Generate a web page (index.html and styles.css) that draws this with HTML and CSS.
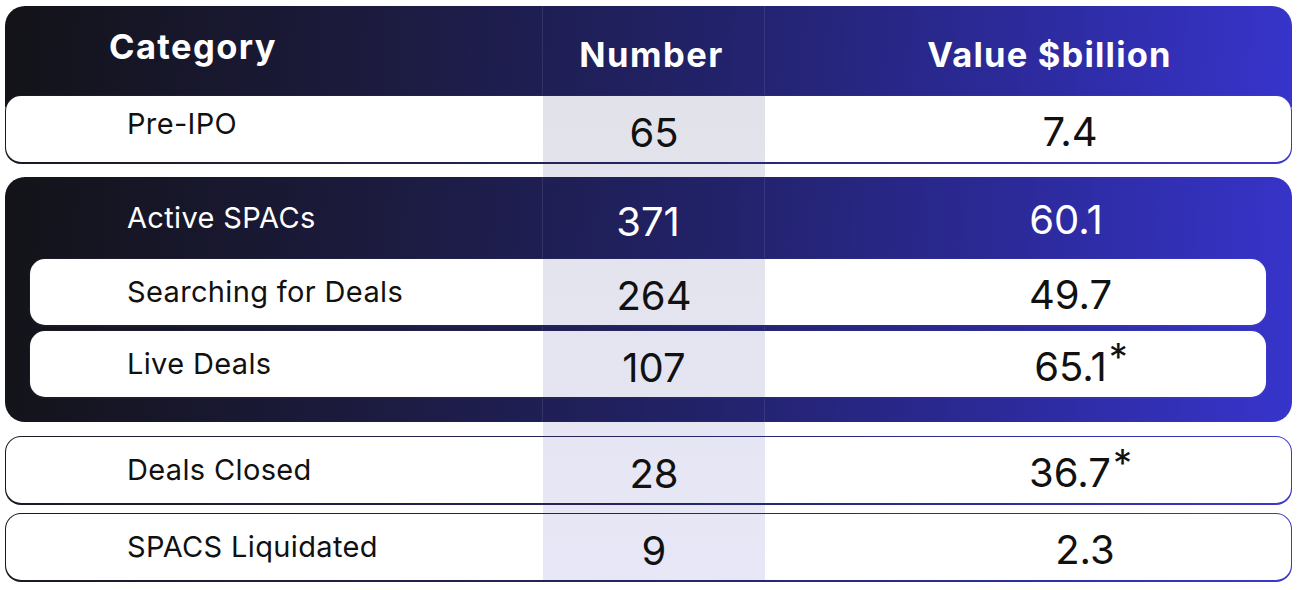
FILE: index.html
```html
<!DOCTYPE html>
<html lang="en">
<head>
<meta charset="utf-8">
<title>SPAC summary</title>
<link rel="stylesheet" href="styles.css">
</head>
<body>
<div class="table">
  <div class="head dark">
    <div class="h-cat">Category</div>
    <div class="h-num">Number</div>
    <div class="h-val">Value $billion</div>
  </div>

  <div class="row row-outer row-first">
    <div class="row-in">
      <div class="c-label lab-up">Pre-IPO</div>
      <div class="c-num stripe">65</div>
      <div class="c-val">7.4</div>
    </div>
  </div>

  <div class="group dark">
    <div class="group-head">
      <div class="c-label">Active SPACs</div>
      <div class="c-num">371</div>
      <div class="c-val">60.1</div>
    </div>
    <div class="row row-inner">
      <div class="row-in">
        <div class="c-label">Searching for Deals</div>
        <div class="c-num stripe">264</div>
        <div class="c-val">49.7</div>
      </div>
    </div>
    <div class="row row-inner">
      <div class="row-in">
        <div class="c-label">Live Deals</div>
        <div class="c-num stripe">107</div>
        <div class="c-val"><span class="v">65.1<span class="star">*</span></span></div>
      </div>
    </div>
  </div>

  <div class="row row-outer row-closed">
    <div class="row-in">
      <div class="c-label">Deals Closed</div>
      <div class="c-num stripe">28</div>
      <div class="c-val"><span class="v">36.7<span class="star">*</span></span></div>
    </div>
  </div>

  <div class="row row-outer row-liq">
    <div class="row-in">
      <div class="c-label">SPACS Liquidated</div>
      <div class="c-num stripe">9</div>
      <div class="c-val val-shift">2.3</div>
    </div>
  </div>
</div>
</body>
</html>
```

FILE: styles.css
```css
* { box-sizing: border-box; }

html, body {
  margin: 0;
  padding: 0;
  background: #ffffff;
}

body {
  font-family: Inter, "Liberation Sans", sans-serif;
  color: #111111;
  width: 1298px;
  height: 590px;
  overflow: hidden;
}

.table {
  margin: 6px 0 0 5px;
  width: 1287px;
  display: flex;
  flex-direction: column;
  background-image: linear-gradient(#e2e2ea, #e7e7f7);
  background-attachment: fixed;
  background-repeat: no-repeat;
  background-position: 543px 95px;
  background-size: 222px 486px;
}

.stripe {
  background-image: linear-gradient(#e2e2ea, #e7e7f7);
  background-attachment: fixed;
  background-repeat: no-repeat;
  background-position: 543px 95px;
  background-size: 222px 486px;
}

.dark {
  background:
    linear-gradient(90deg,
      transparent 537.5px, rgba(255,255,255,0.09) 537.5px, rgba(255,255,255,0.09) 538.5px,
      transparent 538.5px, transparent 759.5px,
      rgba(255,255,255,0.09) 759.5px, rgba(255,255,255,0.09) 760.5px, transparent 760.5px),
    linear-gradient(95deg, #131318 0%, #1c1b40 30%, #22226a 55%, #2c2a9a 78%, #3734cc 100%);
}

/* Header */
.head {
  height: 101px;
  border-radius: 20px 20px 0 0;
  display: grid;
  grid-template-columns: 538px 222px 1fr;
  color: #ffffff;
  font-weight: 700;
  font-size: 34.5px;
  line-height: 40px;
  letter-spacing: 1.4px;
}

.h-cat {
  padding: 21px 0 0 104px;
}

.h-num {
  padding-top: 29px;
  text-align: center;
  letter-spacing: 1.5px;
  padding-right: 5px;
}

.h-val {
  padding: 29px 0 0 42px;
  text-align: center;
  letter-spacing: 1.2px;
}

/* Rows */
.row {
  border-radius: 16px;
  padding: 1px 1px 2px 1px;
  background: linear-gradient(90deg, #1a1a22 0%, #24245a 45%, #2e2c96 75%, #3c38cc 100%);
}

.row-in {
  height: 100%;
  border-radius: 15px;
  overflow: hidden;
  background: #ffffff;
  display: grid;
  align-items: stretch;
}

.row-outer {
  height: 69px;
}

.row-outer .row-in {
  grid-template-columns: 537px 222px 1fr;
}

.row-first {
  margin-top: -12px;
}

.row-closed {
  margin-top: 14px;
}

.row-liq {
  margin-top: 8px;
}

.c-label,
.c-num,
.c-val {
  display: flex;
  align-items: center;
}

.c-label {
  font-size: 29px;
  line-height: 34px;
  letter-spacing: 0.35px;
  padding-left: 121px;
}

.lab-up {
  padding-bottom: 10px;
}

.c-num {
  justify-content: center;
  font-size: 40px;
  line-height: 44px;
  padding-top: 8px;
}

.c-val {
  justify-content: center;
  font-size: 40px;
  line-height: 44px;
  padding-top: 6px;
  padding-left: 84px;
}

.val-shift {
  padding-left: 114px;
}

.v {
  position: relative;
}

.star {
  position: absolute;
  left: 100%;
  top: -5px;
  font-size: 38px;
  line-height: 34px;
  margin-left: 2px;
}

/* Active SPACs group */
.group {
  margin-top: 13px;
  height: 245px;
  border-radius: 20px;
  padding: 0 25px 0 0;
  display: flex;
  flex-direction: column;
  color: #ffffff;
}

.group-head {
  height: 81px;
  display: grid;
  grid-template-columns: 538px 222px 1fr;
  margin-right: -25px;
}

.group-head .c-label {
  padding-left: 122px;
  padding-bottom: 0;
}

.group-head .c-num {
  padding-top: 8px;
  padding-right: 12px;
}

.group-head .c-val {
  padding-left: 75px;
  padding-top: 4px;
}

.row-inner {
  margin-left: 24px;
  height: 69px;
  color: #111111;
}

.row-inner + .row-inner {
  margin-top: 3px;
}

.row-inner .row-in {
  grid-template-columns: 513px 222px 1fr;
}

.row-inner .c-label {
  padding-left: 97px;
}

.row-inner .c-val {
  padding-left: 110px;
}
```
